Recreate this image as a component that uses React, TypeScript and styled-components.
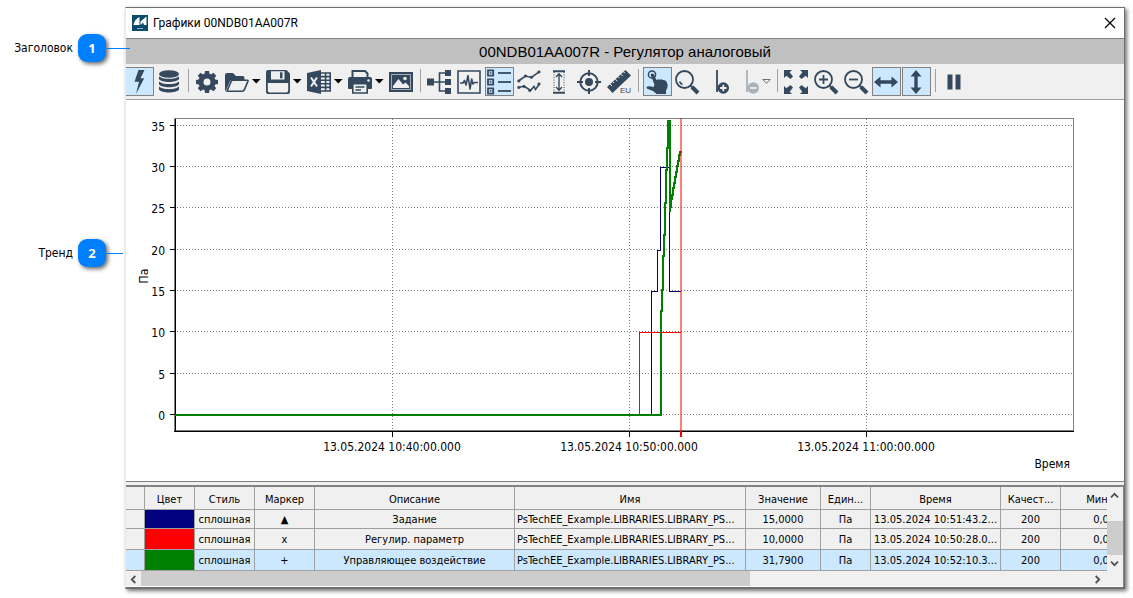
import React from 'react';
import styled, { createGlobalStyle } from 'styled-components';

const INK = '#34495e';
const UI_FONT = '"DejaVu Sans Condensed", "DejaVu Sans", sans-serif';

const GlobalStyle = createGlobalStyle`
  * { box-sizing: border-box; }
  body { margin: 0; background: #fff; color: #000; font-family: ${UI_FONT}; font-size: 12px; }
  button { font: inherit; color: inherit; }
`;

const Page = styled.main`
  display: flex;
  padding: 7px 8px 9px 0;
`;

const Callouts = styled.aside`
  flex: none;
  width: 125px;
  padding-top: 27px;
  display: flex;
  flex-direction: column;
  gap: 177px;
`;

const Callout = styled.div`
  display: grid;
  grid-template-columns: 73px 28px auto;
  column-gap: 5px;
  align-items: center;
  height: 28px;
  font-size: 12px;
`;

const CalloutLabel = styled.span`
  text-align: right;
`;

const Chip = styled.span`
  position: relative;
  height: 28px;
  border-radius: 9px;
  background: #0080ff;
  box-shadow: 2px 2px 4px rgba(0, 0, 0, 0.6);
  color: #fff;
  font: 700 13px/28px "Open Sans", sans-serif;
  text-align: center;
`;

const Connector = styled.span<{ $length: number }>`
  position: absolute;
  left: 28px;
  top: 14px;
  width: ${(p) => p.$length}px;
  height: 1px;
  background: #0080ff;
  z-index: 1;
`;

const Window = styled.section`
  flex: 1;
  min-width: 0;
  border: solid #6e6e6e;
  border-width: 1px 1px 2px;
  border-left-color: #e8e8e8;
  box-shadow: 2px 2px 4px rgba(0, 0, 0, 0.55);
  background: #fff;
`;

const TitleBar = styled.header`
  display: flex;
  align-items: center;
  height: 31px;
  padding: 0 8px 0 6px;
  gap: 5px;
  border-bottom: 1px solid #828282;
`;

const WindowTitle = styled.span`
  flex: 1;
  font: 12px/16px Roboto, sans-serif;
`;

const CloseButton = styled.button`
  display: flex;
  padding: 0;
  border: 0;
  background: none;
`;

const Heading = styled.h1`
  margin: 0;
  height: 25px;
  background: #c0c0c0;
  font: 15px/26px "Liberation Sans", Arial, sans-serif;
  text-align: center;
`;

const Toolbar = styled.div`
  display: flex;
  height: 36px;
  padding-top: 3px;
  background: #f0f0f0;
  border-bottom: 1px solid #a0a0a0;
`;

const Tool = styled.button<{ $active?: boolean; $menu?: boolean }>`
  flex: none;
  display: flex;
  align-items: center;
  gap: 3px;
  width: ${(p) => (p.$menu ? 40 : 29)}px;
  height: 29px;
  margin-left: 1px;
  padding: 0 0 0 1px;
  border: 1px solid ${(p) => (p.$active ? '#828282' : 'transparent')};
  background: ${(p) => (p.$active ? '#cce8ff' : 'transparent')};
  color: ${INK};

  &:first-child {
    margin-left: 0;
    width: 28px;
    border-left: 0;
  }
  &:disabled {
    color: #a9b1b9;
  }
`;

const IconSvg = styled.svg`
  flex: none;
  overflow: visible;
`;

const Separator = styled.span`
  flex: none;
  width: 1px;
  height: 23px;
  margin: 2px 3px 0 4px;
  background: #a0a0a0;
`;

const ChartPanel = styled.div`
  border-bottom: 1px solid #828282;
`;

const ChartSvg = styled.svg`
  display: block;
  width: 100%;
  height: auto;
  font-family: ${UI_FONT};
  font-size: 12px;
`;

const TablePanel = styled.div`
  margin-top: 3px;
  border-top: 2px solid #828282;
  border-right: 1px solid #828282;
  background: #f0f0f0;
  box-shadow: 0 -3px 0 #f0f0f0;
`;

const TableArea = styled.div`
  display: flex;
`;

const TableViewport = styled.div`
  flex: 1;
  min-width: 0;
  overflow: hidden;
`;

const Grid = styled.table`
  width: calc(100% + 54px);
  table-layout: fixed;
  border-collapse: separate;
  border-spacing: 0;
  font-size: 11px;
  line-height: 16px;
`;

const HeadCell = styled.th`
  height: 23px;
  padding: 3px 0 0;
  font-weight: 400;
  border: solid #a0a0a0;
  border-width: 0 1px 1px 0;
  white-space: nowrap;
`;

const Row = styled.tr<{ $selected?: boolean }>`
  height: 21px;
  background: ${(p) => (p.$selected ? '#cce8ff' : '#f0f0f0')};
  &:first-child {
    height: 19px;
  }
`;

const Cell = styled.td<{ $left?: boolean; $fill?: string }>`
  padding: 2px 2px 0;
  border: solid #a0a0a0;
  border-width: 0 1px 1px 0;
  text-align: ${(p) => (p.$left ? 'left' : 'center')};
  background: ${(p) => p.$fill ?? 'transparent'};
  white-space: nowrap;
`;

const ScrollColumn = styled.div`
  flex: none;
  width: 16px;
  display: flex;
  flex-direction: column;
`;

const ScrollRow = styled.div`
  display: flex;
  height: 16px;
  padding-right: 18px;
  border-bottom: 1px solid #fff;
`;

const ScrollArrow = styled.button`
  flex: none;
  width: 15px;
  height: 16px;
  display: flex;
  align-items: center;
  justify-content: center;
  padding: 0;
  border: 0;
  background: none;
`;

const Track = styled.div`
  flex: 1;
  display: flex;
`;

const VerticalTrack = styled(Track)`
  flex-direction: column;
  justify-content: flex-end;
`;

const HorizontalThumb = styled.div`
  flex: 61 0 0;
  background: #cdcdcd;
`;

const TrackRest = styled.div`
  flex: 34 0 0;
`;

const VerticalThumb = styled.div`
  height: 34px;
  background: #cdcdcd;
`;

/* ---------- icons ---------- */

const Icon = ({ children }: { children: React.ReactNode }) => (
  <IconSvg width="24" height="24" viewBox="0 0 24 24" fill="none" stroke="none" aria-hidden="true">
    {children}
  </IconSvg>
);

const bolt = <path fill="currentColor" d="M11.5 0H17.5L13.5 8.3H17.2L9 24L12 11.8H7.5Z" />;

const database = (
  <g fill="currentColor">
    <ellipse cx="12" cy="4" rx="10" ry="3.8" />
    {[0, 5.2, 10.4].map((y) => (
      <path key={y} transform={`translate(0 ${y})`} d="M2 6.2C5 9.6 19 9.6 22 6.2V9C20 13 4 13 2 9Z" />
    ))}
  </g>
);

const gear = (
  <g>
    <circle cx="12" cy="12" r="6" stroke="currentColor" strokeWidth="5" />
    {[0, 45, 90, 135, 180, 225, 270, 315].map((a) => (
      <path key={a} transform={`rotate(${a} 12 12)`} fill="currentColor" d="M9.3 5L10 1H14L14.7 5Z" />
    ))}
  </g>
);

const folder = (
  <g>
    <path fill="currentColor" d="M0 20V5Q0 3 2 3H8L11 6H17.5Q19.5 6 19.5 8V10H7Q5.5 10 5 11.2L0.6 21.5Z" />
    <path fill="#f0f0f0" stroke="currentColor" strokeWidth="1.6" strokeLinejoin="round" d="M2 21.2L6.2 11.2Q6.6 10.2 7.8 10.2H22.2Q23.4 10.2 22.9 11.4L19.4 19.6Q18.8 21.2 17 21.2Z" />
  </g>
);

const floppy = (
  <g>
    <path fill="currentColor" d="M2 0H20.5L24 3.5V22Q24 24 22 24H2Q0 24 0 22V2Q0 0 2 0Z" />
    <path fill="#f0f0f0" d="M5 1.3H18.5V9.5H5ZM1.8 13H22.2V20.5Q22.2 22.4 20.4 22.4H3.6Q1.8 22.4 1.8 20.5Z" />
    <path fill="currentColor" d="M14 2.3H16.5V8.3H14Z" />
  </g>
);

const excel = (
  <g>
    <path fill="currentColor" d="M0 3L14 0V24L0 21Z" />
    <path stroke="#f0f0f0" strokeWidth="2" d="M4 7.5L10 16.5M10 7.5L4 16.5" />
    <path stroke="currentColor" strokeWidth="1.6" d="M14 3H23.2V21H14M14 6.6H23M14 10.2H23M14 13.8H23M14 17.4H23M18.6 3V21" />
  </g>
);

const printer = (
  <g>
    <path stroke="currentColor" strokeWidth="2" d="M4.5 8V1H17L19.5 3.5V8" />
    <path fill="currentColor" d="M2 7H22Q24 7 24 9V18Q24 19 23 19H1Q0 19 0 18V9Q0 7 2 7Z" />
    <circle cx="20.5" cy="10.5" r="1.2" fill="#f0f0f0" />
    <path fill="#f0f0f0" stroke="currentColor" strokeWidth="1.6" d="M4.8 13.8H19.2V23H4.8Z" />
    <path stroke="currentColor" strokeWidth="1.5" d="M7.5 17H16.5M7.5 20H13" />
  </g>
);

const picture = (
  <g>
    <path fill="currentColor" d="M0 2H24V22H0Z" />
    <path stroke="#f0f0f0" strokeOpacity="0.6" d="M2.5 4.5H21.5V19.5H2.5Z" />
    <path fill="#f0f0f0" d="M4 18V16L9.5 9L14 14.5L16.5 12.5L20 16V18Z" />
    <circle cx="16" cy="8.5" r="1.8" fill="#f0f0f0" />
  </g>
);

const tree = (
  <g>
    <path stroke="currentColor" strokeWidth="1.6" d="M6 12H20M20 3H12.5V21H20" />
    <path fill="currentColor" d="M0 8.5H7V15.5H0ZM18 0H24V6H18ZM18 9H24V15H18ZM18 18H24V24H18Z" />
  </g>
);

const wave = (
  <g stroke="currentColor">
    <path strokeWidth="1.6" d="M1 1H23V23H1Z" />
    <path strokeWidth="1.6" strokeLinejoin="round" d="M3 13H6L7.5 10.5L9 15L11 5.5L13 19L14.7 9L16 14L17.5 12.5H21" />
  </g>
);

const legend = (
  <g stroke="currentColor">
    {[0, 9, 18].map((y) => (
      <g key={y}>
        <path strokeWidth="1.8" d={`M1 ${y + 0.4}H6.2V${y + 5.6}H1Z`} />
        <path strokeWidth="1.8" d={`M11 ${y + 3}H24`} />
        <path strokeWidth="1.6" d={`M2.8 ${y + 3}H4.4`} />
      </g>
    ))}
  </g>
);

const markers = (
  <g stroke="currentColor" fill="currentColor">
    <path fill="none" strokeWidth="1.6" d="M1.5 11L8.5 6L14.5 7.5L22 1.8M1.5 17.5L7 16L13.5 20.5L17 16.5L18.5 19.5L22 14.5" />
    {[[1.8, 11], [8.5, 6], [14.5, 7.3], [22, 2], [1.8, 17.5], [7, 16.5], [12.8, 20.5], [22, 14]].map(([x, y]) => (
      <circle key={`${x}-${y}`} cx={x} cy={y} r="1.3" strokeWidth="0.5" />
    ))}
  </g>
);

const verticalRange = (
  <g stroke="currentColor">
    <path strokeWidth="2" d="M6 1.2H18M6 22.8H18" />
    <path strokeWidth="1" strokeDasharray="1 1.5" d="M7 2V22M17 2V22" />
    <path strokeWidth="1.4" d="M12 4V20M9 7L12 3.8L15 7M9 17L12 20.2L15 17" />
  </g>
);

const target = (
  <g stroke="currentColor">
    <circle cx="12" cy="12" r="8.7" strokeWidth="2" />
    <circle cx="12" cy="12" r="4" fill="currentColor" stroke="none" />
    <path strokeWidth="2" d="M12 0V6M12 18V24M0 12H6M18 12H24" />
  </g>
);

const ruler = (
  <g>
    <path fill="currentColor" d="M0 17L18.5 0L24 5.5L5.5 23Z" />
    <path stroke="#f0f0f0" strokeWidth="1" d="M3 14L5 16M5.7 11.7L7 13M8.4 9.2L10.4 11.2M11.1 6.7L12.4 8M13.8 4.2L15.8 6.2M16.5 1.8L17.8 3.1" />
    <text x="13" y="23" fill="currentColor" fontFamily="Liberation Sans, Arial, sans-serif" fontSize="8">EU</text>
  </g>
);

const hand = (
  <g>
    <circle cx="7" cy="4.5" r="3.6" stroke="currentColor" strokeWidth="1.5" />
    <path fill="currentColor" d="M5.6 4.5Q7 2.5 8.8 4.2L11.5 10.2Q13 8.4 14.5 9.7Q16.5 8.6 17.8 10Q20.4 9.4 21.5 11.8Q24 16 21 20.5V24H11.5Q8.5 20.5 3.5 19.3Q0.8 18.3 1.8 16.8Q3.5 15.7 8.8 17L9.4 14.5Z" />
  </g>
);

const Lens = ({ sign }: { sign?: string }) => (
  <g stroke="currentColor">
    <circle cx="9.5" cy="9.5" r="8.5" strokeWidth="1.8" />
    <path strokeWidth="2" d="M15.5 15.5L18 18" />
    <path strokeWidth="4" d="M17 17L23 23" />
    <path strokeWidth="1.8" d={sign ?? 'M4.6 11.5A5.5 5.5 0 0 0 7.5 14.5'} />
  </g>
);

const LineMark = ({ sign }: { sign: string }) => (
  <g>
    <path stroke="currentColor" strokeWidth="1.8" d="M12 0V22" />
    <path stroke="currentColor" strokeDasharray="1 1" d="M12 20.5H17" />
    <circle cx="18.3" cy="18" r="5.7" fill="currentColor" />
    <path stroke="#f0f0f0" strokeWidth="1.8" d={sign} />
  </g>
);

const expand = (
  <g fill="currentColor">
    {[0, 90, 180, 270].map((a) => (
      <path key={a} transform={`rotate(${a} 12 12)`} d="M0 0H8L5.7 2.3L9 6.5L6.5 9L2.3 5.7L0 8Z" />
    ))}
  </g>
);

const doubleArrow = <path fill="currentColor" d="M0 12L6.5 6.5V10.3H17.5V6.5L24 12L17.5 17.5V13.7H6.5V17.5Z" />;

const MenuArrow = ({ outline }: { outline?: boolean }) => (
  <IconSvg width="9" height="5" viewBox="0 0 9 5" aria-hidden="true">
    {outline ? <path fill="none" stroke="#6e6e6e" d="M0.8 0.5H8.2L4.5 4.3Z" /> : <path fill="#000" d="M0 0H8.6L4.3 4.6Z" />}
  </IconSvg>
);

const Chevron = ({ turn }: { turn: number }) => (
  <svg width="9" height="9" viewBox="0 0 9 9" aria-hidden="true">
    <path transform={`rotate(${turn} 4.5 4.5)`} fill="none" stroke="#505050" strokeWidth="1.8" d="M1 6.3L4.5 2.8L8 6.3" />
  </svg>
);

type ToolSpec = { name: string; icon: React.ReactNode; active?: boolean; menu?: boolean; disabled?: boolean };

const tools: (ToolSpec | null)[] = [
  { name: 'Оперативные данные', icon: bolt, active: true },
  { name: 'Архив', icon: database },
  null,
  { name: 'Настройки', icon: gear },
  { name: 'Открыть', icon: folder, menu: true },
  { name: 'Сохранить', icon: floppy, menu: true },
  { name: 'Экспорт в Excel', icon: excel, menu: true },
  { name: 'Печать', icon: printer, menu: true },
  { name: 'Изображение', icon: picture },
  null,
  { name: 'Дерево', icon: tree },
  { name: 'Сигналы', icon: wave },
  { name: 'Легенда', icon: legend, active: true },
  { name: 'Маркеры', icon: markers },
  { name: 'Диапазон', icon: verticalRange },
  { name: 'Центрировать', icon: target },
  { name: 'Единицы измерения', icon: ruler },
  null,
  { name: 'Выбор', icon: hand, active: true },
  { name: 'Лупа', icon: <Lens /> },
  { name: 'Добавить линию', icon: <LineMark sign="M18.3 14.8V21.2M15.1 18H21.5" /> },
  { name: 'Удалить линию', icon: <LineMark sign="M15.1 18H21.5" />, menu: true, disabled: true },
  null,
  { name: 'Показать всё', icon: expand },
  { name: 'Увеличить', icon: <Lens sign="M9.5 5V14M5 9.5H14" /> },
  { name: 'Уменьшить', icon: <Lens sign="M5 9.5H14" /> },
  { name: 'По горизонтали', icon: doubleArrow, active: true },
  { name: 'По вертикали', icon: <g transform="rotate(90 12 12)">{doubleArrow}</g>, active: true },
  null,
  { name: 'Пауза', icon: <path fill="currentColor" d="M5.5 4.5H10.5V19.5H5.5ZM13.5 4.5H18.5V19.5H13.5Z" /> },
];

/* ---------- chart ---------- */

const valueTicks: [number, number][] = [
  [35, 125], [30, 166], [25, 207], [20, 249], [15, 290], [10, 331], [5, 373], [0, 414],
];

const timeTicks: [string, number][] = [
  ['13.05.2024 10:40:00.000', 392],
  ['13.05.2024 10:50:00.000', 629],
  ['13.05.2024 11:00:00.000', 866],
];

const TrendChart = () => (
  <ChartSvg viewBox="126 100 998 381" role="img" aria-label="Тренд">
    <g shapeRendering="crispEdges" fill="none">
      <g stroke="#808080" strokeDasharray="1 2">
        {valueTicks.map(([v, y]) => (
          <path key={v} d={`M177 ${y + 0.5}H1073`} />
        ))}
        {timeTicks.map(([t, x]) => (
          <path key={t} d={`M${x + 0.5} 119V430`} />
        ))}
      </g>
      <path stroke="#808080" d="M174.5 431V118.5H1073.5V430.5H176" />
      <path stroke="#000" d="M175.5 119V431.5M174 431.5H1074" />
      <g stroke="#000">
        {valueTicks.map(([v, y]) => (
          <path key={v} d={`M170 ${y + 0.5}H175`} />
        ))}
        {timeTicks.map(([t, x]) => (
          <path key={t} d={`M${x + 0.5} 432V437`} />
        ))}
      </g>
      <path stroke="#000080" d="M651.5 414V291.5H657.5V250.5H660.5V167.5H669.5V291.5H681" />
      <path stroke="#f00" d="M639.5 414V332.5H681" />
      <path
        stroke="#008000"
        strokeWidth="2"
        d="M175 415H661V311H662V290H663V256H664V235H665V203H666V170H667V148H668V121H669V149M670 120V212M671 208V199H672V195H673V188H674V183H675V177H676V172H677V166H678V161H679V155H680V152H682"
      />
      <path stroke="#f00" strokeOpacity="0.5" strokeWidth="2" d="M681 118V430" />
      <path stroke="#f00" strokeWidth="2" d="M681 430V437" />
    </g>
    <g textAnchor="end">
      {valueTicks.map(([v, y]) => (
        <text key={v} x="165" y={y + 6}>{v}</text>
      ))}
      <text x="1070" y="468">Время</text>
    </g>
    <g textAnchor="middle">
      {timeTicks.map(([t, x]) => (
        <text key={t} x={x} y="451">{t}</text>
      ))}
      <text transform="translate(148 276) rotate(-90)">Па</text>
    </g>
  </ChartSvg>
);

/* ---------- table ---------- */

const columns: { title: string; width?: number }[] = [
  { title: '', width: 19 },
  { title: 'Цвет', width: 50 },
  { title: 'Стиль', width: 60 },
  { title: 'Маркер', width: 60 },
  { title: 'Описание', width: 200 },
  { title: 'Имя' },
  { title: 'Значение', width: 75 },
  { title: 'Един...', width: 50 },
  { title: 'Время', width: 130 },
  { title: 'Качест...', width: 60 },
  { title: 'Минимум', width: 100 },
];

const rows = [
  { color: '#000080', marker: '▲', text: 'Задание', value: '15,0000', time: '13.05.2024 10:51:43.2...' },
  { color: '#ff0000', marker: 'x', text: 'Регулир. параметр', value: '10,0000', time: '13.05.2024 10:50:28.0...' },
  { color: '#008000', marker: '+', text: 'Управляющее воздействие', value: '31,7900', time: '13.05.2024 10:52:10.3...', selected: true },
];

const SeriesTable = () => (
  <Grid>
    <colgroup>
      {columns.map((c) => (
        <col key={c.title} width={c.width} />
      ))}
    </colgroup>
    <thead>
      <tr>
        {columns.map((c) => (
          <HeadCell key={c.title} scope="col">{c.title}</HeadCell>
        ))}
      </tr>
    </thead>
    <tbody>
      {rows.map((r) => (
        <Row key={r.text} $selected={r.selected}>
          <Cell />
          <Cell $fill={r.color} />
          <Cell>сплошная</Cell>
          <Cell>{r.marker}</Cell>
          <Cell>{r.text}</Cell>
          <Cell $left>PsTechEE_Example.LIBRARIES.LIBRARY_PS...</Cell>
          <Cell>{r.value}</Cell>
          <Cell>Па</Cell>
          <Cell>{r.time}</Cell>
          <Cell>200</Cell>
          <Cell>0,0000</Cell>
        </Row>
      ))}
    </tbody>
  </Grid>
);

export default function App() {
  return (
    <>
      <GlobalStyle />
      <Page>
        <Callouts>
          <Callout>
            <CalloutLabel>Заголовок</CalloutLabel>
            <Chip>1<Connector $length={24} /></Chip>
          </Callout>
          <Callout>
            <CalloutLabel>Тренд</CalloutLabel>
            <Chip>2<Connector $length={17} /></Chip>
          </Callout>
        </Callouts>
        <Window>
          <TitleBar>
            <svg width="16" height="16" viewBox="0 0 16 16" aria-hidden="true">
              <path fill="#0b4a6b" d="M0 0H16V16H0Z" />
              <path fill="#fff" d="M1.5 10C2 6 4.500 3.500 7.500 2V10ZM8.500 6.500L14.500 1.500V10H12L11 7.500L8.500 10Z" />
              <path stroke="#8fb3c6" d="M5 13.500H11" />
            </svg>
            <WindowTitle>Графики 00NDB01AA007R</WindowTitle>
            <CloseButton aria-label="Закрыть">
              <svg width="12" height="12" viewBox="0 0 12 12" aria-hidden="true">
                <path stroke="#000" strokeWidth="1.2" d="M1 1L11 11M11 1L1 11" />
              </svg>
            </CloseButton>
          </TitleBar>
          <Heading>00NDB01AA007R - Регулятор аналоговый</Heading>
          <Toolbar role="toolbar">
            {tools.map((t, i) =>
              t ? (
                <Tool key={t.name} aria-label={t.name} $active={t.active} $menu={t.menu} disabled={t.disabled}>
                  <Icon>{t.icon}</Icon>
                  {t.menu && <MenuArrow outline={t.disabled} />}
                </Tool>
              ) : (
                <Separator key={i} />
              ),
            )}
          </Toolbar>
          <ChartPanel>
            <TrendChart />
          </ChartPanel>
          <TablePanel>
            <TableArea>
              <TableViewport>
                <SeriesTable />
              </TableViewport>
              <ScrollColumn>
                <ScrollArrow aria-label="Вверх"><Chevron turn={0} /></ScrollArrow>
                <VerticalTrack>
                  <VerticalThumb />
                </VerticalTrack>
                <ScrollArrow aria-label="Вниз"><Chevron turn={180} /></ScrollArrow>
              </ScrollColumn>
            </TableArea>
            <ScrollRow>
              <ScrollArrow aria-label="Влево"><Chevron turn={270} /></ScrollArrow>
              <Track>
                <HorizontalThumb />
                <TrackRest />
              </Track>
              <ScrollArrow aria-label="Вправо"><Chevron turn={90} /></ScrollArrow>
            </ScrollRow>
          </TablePanel>
        </Window>
      </Page>
    </>
  );
}
